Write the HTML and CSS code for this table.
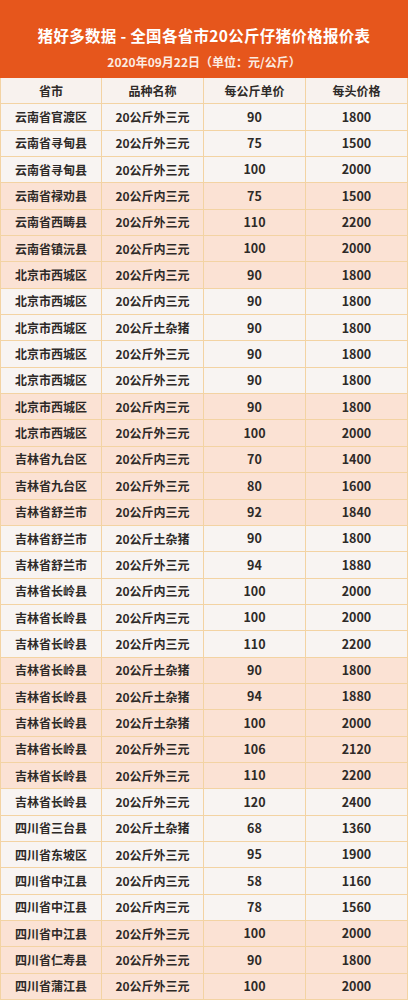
FILE: index.html
```html
<!DOCTYPE html>
<html lang="zh-CN">
<head>
<meta charset="utf-8">
<title>猪好多数据 - 全国各省市20公斤仔猪价格报价表</title>
<link rel="stylesheet" href="styles.css">
</head>
<body>
<div class="page">
  <header class="banner">
    <div class="title">猪好多数据 - 全国各省市20公斤仔猪价格报价表</div>
    <div class="date">2020年09月22日（单位：元/公斤）</div>
  </header>
  <div class="table">
    <div class="row head"><div class="cell">省市</div><div class="cell">品种名称</div><div class="cell">每公斤单价</div><div class="cell">每头价格</div></div>
    <div class="row"><div class="cell">云南省官渡区</div><div class="cell">20公斤外三元</div><div class="cell">90</div><div class="cell">1800</div></div>
    <div class="row"><div class="cell">云南省寻甸县</div><div class="cell">20公斤外三元</div><div class="cell">75</div><div class="cell">1500</div></div>
    <div class="row"><div class="cell">云南省寻甸县</div><div class="cell">20公斤外三元</div><div class="cell">100</div><div class="cell">2000</div></div>
    <div class="row pk"><div class="cell">云南省禄劝县</div><div class="cell">20公斤内三元</div><div class="cell">75</div><div class="cell">1500</div></div>
    <div class="row pk"><div class="cell">云南省西畴县</div><div class="cell">20公斤外三元</div><div class="cell">110</div><div class="cell">2200</div></div>
    <div class="row pk"><div class="cell">云南省镇沅县</div><div class="cell">20公斤内三元</div><div class="cell">100</div><div class="cell">2000</div></div>
    <div class="row pk"><div class="cell">北京市西城区</div><div class="cell">20公斤内三元</div><div class="cell">90</div><div class="cell">1800</div></div>
    <div class="row"><div class="cell">北京市西城区</div><div class="cell">20公斤内三元</div><div class="cell">90</div><div class="cell">1800</div></div>
    <div class="row"><div class="cell">北京市西城区</div><div class="cell">20公斤土杂猪</div><div class="cell">90</div><div class="cell">1800</div></div>
    <div class="row"><div class="cell">北京市西城区</div><div class="cell">20公斤外三元</div><div class="cell">90</div><div class="cell">1800</div></div>
    <div class="row"><div class="cell">北京市西城区</div><div class="cell">20公斤外三元</div><div class="cell">90</div><div class="cell">1800</div></div>
    <div class="row pk"><div class="cell">北京市西城区</div><div class="cell">20公斤内三元</div><div class="cell">90</div><div class="cell">1800</div></div>
    <div class="row pk"><div class="cell">北京市西城区</div><div class="cell">20公斤外三元</div><div class="cell">100</div><div class="cell">2000</div></div>
    <div class="row pk"><div class="cell">吉林省九台区</div><div class="cell">20公斤内三元</div><div class="cell">70</div><div class="cell">1400</div></div>
    <div class="row pk"><div class="cell">吉林省九台区</div><div class="cell">20公斤外三元</div><div class="cell">80</div><div class="cell">1600</div></div>
    <div class="row pk"><div class="cell">吉林省舒兰市</div><div class="cell">20公斤内三元</div><div class="cell">92</div><div class="cell">1840</div></div>
    <div class="row"><div class="cell">吉林省舒兰市</div><div class="cell">20公斤土杂猪</div><div class="cell">90</div><div class="cell">1800</div></div>
    <div class="row"><div class="cell">吉林省舒兰市</div><div class="cell">20公斤外三元</div><div class="cell">94</div><div class="cell">1880</div></div>
    <div class="row"><div class="cell">吉林省长岭县</div><div class="cell">20公斤内三元</div><div class="cell">100</div><div class="cell">2000</div></div>
    <div class="row"><div class="cell">吉林省长岭县</div><div class="cell">20公斤内三元</div><div class="cell">100</div><div class="cell">2000</div></div>
    <div class="row"><div class="cell">吉林省长岭县</div><div class="cell">20公斤内三元</div><div class="cell">110</div><div class="cell">2200</div></div>
    <div class="row pk"><div class="cell">吉林省长岭县</div><div class="cell">20公斤土杂猪</div><div class="cell">90</div><div class="cell">1800</div></div>
    <div class="row pk"><div class="cell">吉林省长岭县</div><div class="cell">20公斤土杂猪</div><div class="cell">94</div><div class="cell">1880</div></div>
    <div class="row pk"><div class="cell">吉林省长岭县</div><div class="cell">20公斤土杂猪</div><div class="cell">100</div><div class="cell">2000</div></div>
    <div class="row pk"><div class="cell">吉林省长岭县</div><div class="cell">20公斤外三元</div><div class="cell">106</div><div class="cell">2120</div></div>
    <div class="row pk"><div class="cell">吉林省长岭县</div><div class="cell">20公斤外三元</div><div class="cell">110</div><div class="cell">2200</div></div>
    <div class="row"><div class="cell">吉林省长岭县</div><div class="cell">20公斤外三元</div><div class="cell">120</div><div class="cell">2400</div></div>
    <div class="row"><div class="cell">四川省三台县</div><div class="cell">20公斤土杂猪</div><div class="cell">68</div><div class="cell">1360</div></div>
    <div class="row"><div class="cell">四川省东坡区</div><div class="cell">20公斤外三元</div><div class="cell">95</div><div class="cell">1900</div></div>
    <div class="row"><div class="cell">四川省中江县</div><div class="cell">20公斤内三元</div><div class="cell">58</div><div class="cell">1160</div></div>
    <div class="row"><div class="cell">四川省中江县</div><div class="cell">20公斤内三元</div><div class="cell">78</div><div class="cell">1560</div></div>
    <div class="row pk"><div class="cell">四川省中江县</div><div class="cell">20公斤外三元</div><div class="cell">100</div><div class="cell">2000</div></div>
    <div class="row pk"><div class="cell">四川省仁寿县</div><div class="cell">20公斤外三元</div><div class="cell">90</div><div class="cell">1800</div></div>
    <div class="row pk"><div class="cell">四川省蒲江县</div><div class="cell">20公斤外三元</div><div class="cell">100</div><div class="cell">2000</div></div>
  </div>
</div>
</body>
</html>
```

FILE: styles.css
```css
* { box-sizing: border-box; }
html, body { margin: 0; padding: 0; }
body {
  width: 408px;
  background: #f8f4f2;
  font-family: "Noto Sans CJK SC", "Noto Sans", sans-serif;
  color: #2e2a28;
}
.page { width: 408px; }
.banner {
  background: #e6561c;
  color: #ffffff;
  text-align: center;
  height: 78px;
  padding-top: 24px;
}
.title {
  font-size: 15.5px;
  font-weight: 700;
  line-height: 22px;
  letter-spacing: 0.3px;
}
.date {
  margin-top: 8px;
  font-size: 12px;
  font-weight: 700;
  line-height: 16px;
  color: #fcece2;
}
.table {
  border-left: 1px solid #f3d3a3;
  border-right: 1px solid #f3d3a3;
}
.row {
  display: grid;
  grid-template-columns: 101px 102px 102px 1fr;
  height: 26.35px;
  border-bottom: 1px solid #f3d3a3;
  background: #f8f4f2;
}
.row.pk { background: #fbe2d4; }
.row.head { background: #f8f2ee; }
.cell {
  display: flex;
  align-items: center;
  justify-content: center;
  font-size: 12px;
  font-weight: 700;
  line-height: 1;
  border-right: 1px solid #f3d3a3;
  white-space: nowrap;
}
.row .cell:nth-child(n+3) { font-size: 12.5px; }
.row.head .cell { font-size: 12px; }
.cell:last-child { border-right: none; }
```
